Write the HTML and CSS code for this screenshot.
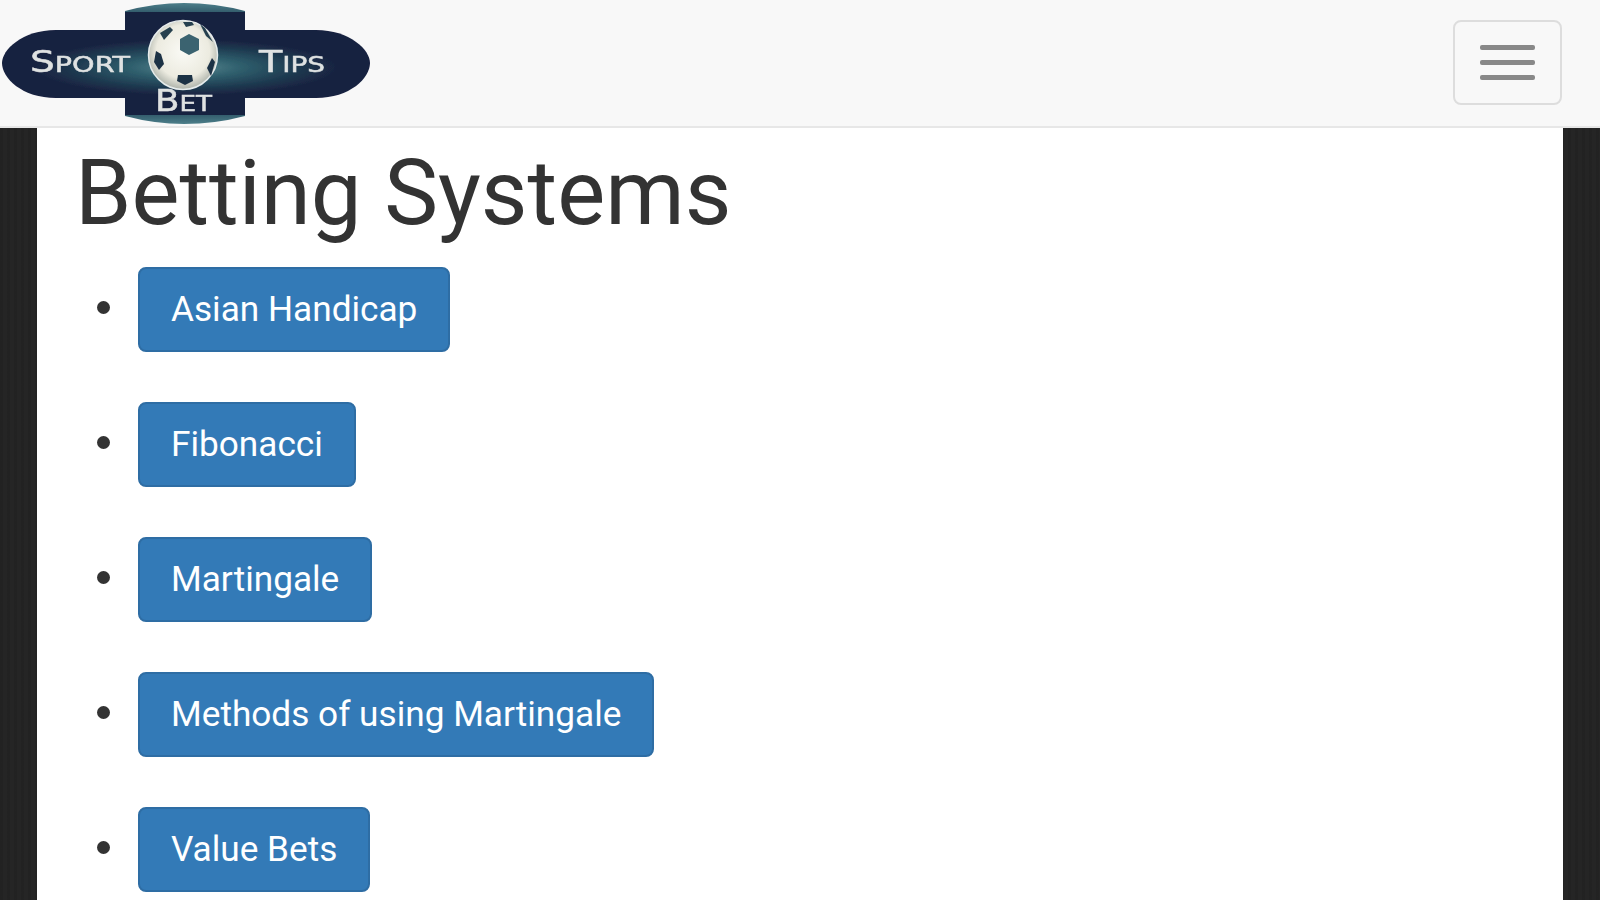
FILE: index.html
```html
<!DOCTYPE html>
<html lang="en">
<head>
  <meta charset="UTF-8" />
  <meta name="viewport" content="width=device-width, initial-scale=1.0" />
  <title>Betting Systems</title>
  <link rel="stylesheet" href="styles.css">
</head>
<body>
  <nav class="navbar">
    <a class="brand" href="#">
      <svg class="logo" width="372" height="126" viewBox="0 0 372 126">
        <defs>
          <radialGradient id="bandGlow" cx="0.5" cy="0.55" r="0.5">
            <stop offset="0" stop-color="#5c8a92" />
            <stop offset="0.3" stop-color="#2f5f6d" />
            <stop offset="0.6" stop-color="#1e3a50" />
            <stop offset="0.85" stop-color="#18203f" />
            <stop offset="1" stop-color="#18203f" />
          </radialGradient>
          <linearGradient id="capFill" x1="0" y1="0" x2="0" y2="1">
            <stop offset="0" stop-color="#4d7f8a" />
            <stop offset="0.1" stop-color="#2a5263" />
            <stop offset="0.9" stop-color="#2a5263" />
            <stop offset="1" stop-color="#4d7f8a" />
          </linearGradient>
          <radialGradient id="ballFill" cx="0.5" cy="0.45" r="0.55">
            <stop offset="0" stop-color="#fafaf5" />
            <stop offset="0.7" stop-color="#ecebe0" />
            <stop offset="1" stop-color="#aeb3aa" />
          </radialGradient>
          <filter id="soften">
            <feGaussianBlur stdDeviation="0.7" />
          </filter>
        </defs>
        <g filter="url(#soften)">
          <path d="M125 11 Q155 3 184 3 Q215 3 245 11 L245 116 Q215 124 184 124 Q155 124 125 116 Z" fill="url(#capFill)" />
          <rect x="125" y="12" width="120" height="25" fill="#18203f" />
          <rect x="125" y="91" width="120" height="24" fill="#18203f" />
          <path d="M56 30 H316 C350 30 370 50 370 63 C370 78 350 98 316 98 H56 C22 98 2 78 2 63 C2 50 22 30 56 30 Z" fill="url(#bandGlow)" />
          <circle cx="183" cy="55" r="34.5" fill="url(#ballFill)" stroke="#e6ecec" stroke-width="1.5" />
          <path d="M189 34 L180 39 L180 50 L189 55 L199 50 L199 39 Z" fill="#3b6470" />
          <path d="M156 51 L161 54 L164 64 L159 70 L154 62 Z" fill="#1e3144" />
          <path d="M178 75 L192 75 L193 81 L185 85 L177 81 Z" fill="#1e3144" />
          <path d="M212 58 L215 62 L211 76 L207 68 Z" fill="#1e3144" />
          <path d="M160 33 L170 27 L173 30 L164 40 Z" fill="#26414f" />
          <path d="M200 24 L205 28 L213 42 L206 36 Z" fill="#26414f" />
          <path d="M183 22 L192 22 L194 25 L186 27 Z" fill="#26414f" />
          <text class="logo-text" x="30" y="72" textLength="100" lengthAdjust="spacingAndGlyphs">S<tspan class="logo-small">PORT</tspan></text>
          <text class="logo-text" x="259" y="72" textLength="66" lengthAdjust="spacingAndGlyphs">T<tspan class="logo-small">IPS</tspan></text>
          <text class="logo-text" x="155" y="111" textLength="57" lengthAdjust="spacingAndGlyphs">B<tspan class="logo-small">ET</tspan></text>
        </g>
      </svg>
    </a>
    <button class="menu-toggle" type="button">
      <span class="icon-bar"></span>
      <span class="icon-bar"></span>
      <span class="icon-bar"></span>
    </button>
  </nav>

  <div class="container">
    <h1>Betting Systems</h1>
    <ul class="system-list">
      <li><a class="btn" href="#">Asian Handicap</a></li>
      <li><a class="btn" href="#">Fibonacci</a></li>
      <li><a class="btn" href="#">Martingale</a></li>
      <li><a class="btn" href="#">Methods of using Martingale</a></li>
      <li><a class="btn" href="#">Value Bets</a></li>
    </ul>
  </div>
</body>
</html>
```

FILE: styles.css
```css
html, body {
  height: 100%;
}
body {
  margin: 0;
  height: 900px;
  overflow: hidden;
  font-family: Roboto, "Liberation Sans", sans-serif;
  color: #333;
  background: #252525 repeating-linear-gradient(90deg, rgba(0,0,0,0.08) 0 3px, transparent 3px 7px);
}
.navbar {
  display: flex;
  align-items: flex-start;
  justify-content: space-between;
  height: 126px;
  background: #f8f8f8;
  border-bottom: 2px solid #e7e7e7;
}
.brand {
  display: block;
  height: 126px;
}
.logo {
  display: block;
}
.logo-text {
  font-family: "DejaVu Sans", sans-serif;
  font-size: 30px;
  fill: #dfe2e2;
  stroke: #dfe2e2;
  stroke-width: 0.5px;
}
.logo-small {
  font-size: 22px;
}
.menu-toggle {
  display: flex;
  flex-direction: column;
  align-items: center;
  justify-content: center;
  gap: 10px;
  width: 109px;
  height: 85px;
  margin: 20px 38px 0 0;
  padding: 0;
  background: transparent;
  border: 2px solid #ddd;
  border-radius: 8px;
}
.icon-bar {
  display: block;
  width: 55px;
  height: 5px;
  background: #888;
  border-radius: 2px;
}
.container {
  box-sizing: border-box;
  width: 1526px;
  height: 772px;
  margin: 0 auto;
  padding: 0 38px;
  overflow: hidden;
  background: #fff;
}
h1 {
  margin: 18px 0 27px;
  font-size: 90.6px;
  font-weight: 400;
  line-height: 94px;
}
.system-list {
  display: flex;
  flex-direction: column;
  gap: 50px;
  margin: 0;
  padding: 0;
  list-style: none;
}
.system-list li {
  display: flex;
  align-items: flex-start;
  height: 85px;
}
.system-list li::before {
  content: "";
  flex: none;
  width: 13px;
  height: 13px;
  margin: 34px 28px 0 22px;
  background: #333;
  border-radius: 50%;
}
.btn {
  display: block;
  padding: 0 31px;
  font-size: 35.2px;
  line-height: 81px;
  color: #fff;
  text-decoration: none;
  background: #337ab7;
  border: 2px solid #2e6da4;
  border-radius: 8px;
}
```
